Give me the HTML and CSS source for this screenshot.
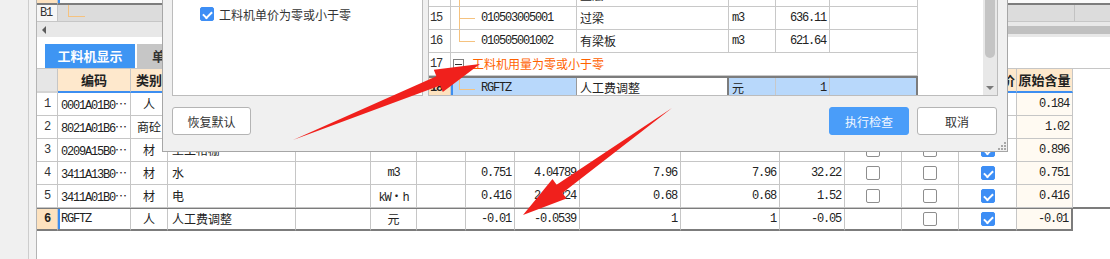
FILE: index.html
```html
<!DOCTYPE html>
<html lang="zh-CN">
<head>
    <meta charset="UTF-8">
    <title>工料机检查</title>
    <link rel="stylesheet" href="styles.css">
</head>
<body>
    <div class="app">
        <div class="side"></div>
        <div class="main">
            <div class="top-grid">
                <div class="trow trow-cur">
                    <span class="rn"></span>
                    <span class="tc"></span>
                </div>
                <div class="trow trow-group">
                    <span class="rn mono">B1</span>
                    <span class="tc wide"><i class="branch end"></i></span>
                    <span class="tc"></span>
                </div>
            </div>
            <div class="hscroll"><i class="arrow-left"></i><i class="hthumb"></i></div>

            <div class="tabs">
                <div class="tab on">工料机显示</div>
                <div class="tab">单价构成</div>
            </div>

            <div class="tbl">
                <div class="tr th">
                    <span class="rn"></span><span>编码</span><span>类别</span><span></span><span></span><span></span><span></span><span></span><span></span><span></span><span></span><span></span><span></span><span></span><span class="tail">是否计价</span><span>原始含量</span>
                </div>
                <div class="tr">
                    <span class="rn mono">1</span><span class="cd mono">0001A01B0<span class="ell">…</span></span><span class="c">人</span><span></span><span></span><span></span><span></span><span></span><span></span><span></span><span></span><span></span><span class="ck"><i class="cb"></i></span><span class="ck"><i class="cb"></i></span><span class="ck"><i class="cb on"></i></span><span class="og r mono">0.184</span>
                </div>
                <div class="tr">
                    <span class="rn mono">2</span><span class="cd mono">8021A01B6<span class="ell">…</span></span><span class="c">商砼</span><span></span><span></span><span></span><span></span><span></span><span></span><span></span><span></span><span></span><span class="ck"><i class="cb"></i></span><span class="ck"><i class="cb"></i></span><span class="ck"><i class="cb on"></i></span><span class="og r mono">1.02</span>
                </div>
                <div class="tr">
                    <span class="rn mono">3</span><span class="cd mono">0209A15B0<span class="ell">…</span></span><span class="c">材</span><span class="nm">土工格栅</span><span></span><span></span><span></span><span></span><span></span><span></span><span></span><span></span><span class="ck"><i class="cb"></i></span><span class="ck"><i class="cb"></i></span><span class="ck"><i class="cb on"></i></span><span class="og r mono">0.896</span>
                </div>
                <div class="tr">
                    <span class="rn mono">4</span><span class="cd mono">3411A13B0<span class="ell">…</span></span><span class="c">材</span><span class="nm">水</span><span></span><span class="c mono">m3</span><span></span><span class="r mono">0.751</span><span class="r mono">4.04789</span><span class="r mono">7.96</span><span class="r mono">7.96</span><span class="r mono">32.22</span><span class="ck"><i class="cb"></i></span><span class="ck"><i class="cb"></i></span><span class="ck"><i class="cb on"></i></span><span class="og r mono">0.751</span>
                </div>
                <div class="tr">
                    <span class="rn mono">5</span><span class="cd mono">3411A01B0<span class="ell">…</span></span><span class="c">材</span><span class="nm">电</span><span></span><span class="c mono">kW<span class="ell">·</span>h</span><span></span><span class="r mono">0.416</span><span class="r mono">2.04224</span><span class="r mono">0.68</span><span class="r mono">0.68</span><span class="r mono">1.52</span><span class="ck"><i class="cb"></i></span><span class="ck"><i class="cb"></i></span><span class="ck"><i class="cb on"></i></span><span class="og r mono">0.416</span>
                </div>
                <div class="tr cur">
                    <span class="rn mono">6</span><span class="cd mono">RGFTZ</span><span class="c">人</span><span class="nm">人工费调整</span><span></span><span class="c">元</span><span></span><span class="r mono">-0.01</span><span class="r mono">-0.0539</span><span class="r mono">1</span><span class="r mono">1</span><span class="r mono">-0.05</span><span></span><span class="ck"><i class="cb"></i></span><span class="ck"><i class="cb on"></i></span><span class="og r mono">-0.01</span>
                </div>
            </div>
        </div>
    </div>

    <div class="dialog">
        <div class="dlg-body">
            <div class="opt-panel">
                <label class="opt"><i class="cb on"></i>工料机单价为零或小于零</label>
            </div>
            <div class="res-panel">
                <div class="res-table">
                    <div class="rr">
                        <span class="rn"></span><span class="code"><i class="branch"></i></span><span class="nm">垫层</span><span></span><span></span><span></span>
                    </div>
                    <div class="rr">
                        <span class="rn mono">15</span><span class="code"><i class="branch"></i><em class="mono">010503005001</em></span><span class="nm">过梁</span><span class="unit mono">m3</span><span class="r mono">636.11</span><span></span>
                    </div>
                    <div class="rr">
                        <span class="rn mono">16</span><span class="code"><i class="branch end"></i><em class="mono">010505001002</em></span><span class="nm">有梁板</span><span class="unit mono">m3</span><span class="r mono">621.64</span><span></span>
                    </div>
                    <div class="rr">
                        <span class="rn mono">17</span><span class="group"><i class="fold"></i>工料机用量为零或小于零</span>
                    </div>
                    <div class="rr cur">
                        <span class="rn mono">18</span><span class="code sel"><i class="branch end"></i><em class="mono">RGFTZ</em></span><span class="nm focus">人工费调整</span><span class="unit sel">元</span><span class="r mono sel">1</span><span class="sel last"></span>
                    </div>
                </div>
                <div class="vscroll"><i class="vthumb"></i><i class="vdown"></i></div>
            </div>
        </div>
        <div class="dlg-foot">
            <button class="btn">恢复默认</button>
            <button class="btn primary">执行检查</button>
            <button class="btn">取消</button>
        </div>
        <svg class="grip" width="9" height="9" viewBox="0 0 9 9">
            <rect x="7" y="1" width="2" height="2"/>
            <rect x="4" y="4" width="2" height="2"/>
            <rect x="7" y="4" width="2" height="2"/>
            <rect x="1" y="7" width="2" height="2"/>
            <rect x="4" y="7" width="2" height="2"/>
            <rect x="7" y="7" width="2" height="2"/>
        </svg>
    </div>

    <!-- annotation arrows drawn on top of the screenshot -->
    <svg class="marks" width="1110" height="259" viewBox="0 0 1110 259">
        <polygon points="293,140 436.4,76.3 433.8,69.8 480,64 442.8,92 440.2,85.5"/>
        <polygon points="672,108 556.6,184.7 552.5,179.1 523,215 566.5,198.5 562.4,192.9"/>
    </svg>
</body>
</html>
```

FILE: styles.css
```css
* {
    box-sizing: border-box;
}

body {
    margin: 0;
    width: 1110px;
    height: 259px;
    overflow: hidden;
    position: relative;
    background: #fff;
    font-family: "Noto Sans CJK SC", "Liberation Sans", sans-serif;
    font-size: 12px;
    color: #222;
}

i, em {
    font-style: normal;
}

.mono {
    font-family: "Liberation Mono", monospace;
    letter-spacing: -1.2px;
}

.ell {
    font-family: "Noto Sans CJK SC", sans-serif;
    letter-spacing: 0;
}

.app {
    display: flex;
    height: 259px;
}

.side {
    flex: 0 0 37px;
    border-right: 1px solid #b4b4b4;
    background: linear-gradient(to right, #f0f0f0 28px, #cdcdcd 28px, #cdcdcd 29px, #f2f2f2 29px);
}

.main {
    flex: 1;
    display: flex;
    flex-direction: column;
}

/* upper grid (partly hidden) */
.top-grid {
    border-bottom: 1px solid #c6c6c6;
}

.trow {
    display: flex;
}

.trow .rn {
    flex: 0 0 21px;
    border-right: 1px solid #c6c6c6;
}

.trow .tc {
    flex: 1;
}

.trow-cur {
    height: 5px;
}

.trow-cur .rn {
    background: #fde2bf;
    border-bottom: 2px solid #7c7c7c;
}

.trow-cur .tc {
    background: #fafafa;
    border-bottom: 2px solid #7c7c7c;
    box-shadow: inset 2px 0 0 #3d8ef0;
}

.trow-group {
    height: 16px;
}

.trow-group .rn {
    background: #f6f6f6;
    line-height: 16px;
    padding-left: 3px;
    color: #333;
}

.trow-group .tc {
    background: #dcdcdc;
    display: flex;
}

.trow-group .tc.wide {
    flex: 0 0 1017px;
    border-right: 1px solid #c2c2c2;
}

.trow-group .branch {
    margin-left: 10px;
    width: 17px;
}

.hscroll {
    height: 15px;
    background: #e8e8e8;
    display: flex;
    align-items: center;
}

.arrow-left {
    width: 0;
    height: 0;
    margin-left: 5px;
    border-top: 4px solid transparent;
    border-bottom: 4px solid transparent;
    border-right: 4px solid #5c5c5c;
}

.hthumb {
    margin-left: auto;
    width: 520px;
    height: 8px;
    background: #c0c0c0;
}

/* tabs */
.tabs {
    display: flex;
    gap: 2px;
    height: 24px;
    margin-top: 7px;
    padding-left: 8px;
}

.tab {
    padding: 0 15px;
    line-height: 24px;
    font-size: 13px;
    font-weight: bold;
    background: #c6c6c6;
    color: #333;
}

.tab.on {
    width: 90px;
    padding: 0;
    text-align: center;
    background: #3e95f3;
    color: #fff;
}

/* main grid */
.tbl {
    border-top: 1px solid #c6c6c6;
}

.tr {
    display: grid;
    grid-template-columns: 21px 73px 37px 128px 75px 46px 49px 49px 65px 101px 99px 65px 57px 57px 58px 56px;
    height: 23px;
}

.tr > span {
    border-right: 1px solid #c6c6c6;
    border-bottom: 1px solid #c6c6c6;
    line-height: 22px;
    white-space: nowrap;
    overflow: hidden;
}

.tr.th {
    height: 24px;
}

.tr.th > span {
    border-bottom: 2px solid #3d8ef0;
    background: #fee8cc;
    font-weight: bold;
    font-size: 13px;
    text-align: center;
}

.tr.th > .tail {
    text-align: right;
    padding-right: 1px;
}

.tr.th > .rn {
    background: #e6e6e6;
    border-bottom-color: #d4d4d4;
}

.tr .rn {
    text-align: center;
    color: #333;
}

.c {
    text-align: center;
}

.r {
    text-align: right;
    padding-right: 3px;
}

.cd {
    padding-left: 3px;
}

.nm {
    padding-left: 4px;
}

.ck {
    display: flex;
    align-items: center;
    justify-content: center;
}

.og {
    background: #fffaf2;
}

.tr.cur {
    height: 24px;
    margin-top: -1px;
    border-top: 2px solid #7c7c7c;
}

.tr.cur > span {
    border-bottom: 2px solid #7c7c7c;
    line-height: 20px;
}

.tr.cur > .rn {
    background: #fde2bf;
    font-weight: bold;
    color: #222;
}

.tr.cur > .cd {
    box-shadow: inset 2px 0 0 #3d8ef0;
}

.tr.cur > .og {
    border-right: 2px solid #7c7c7c;
}

/* checkboxes */
.cb {
    display: block;
    width: 14px;
    height: 14px;
    border: 1px solid #8e8e8e;
    border-radius: 2px;
    background: #fff;
}

.cb.on {
    border-color: #3d8ef5;
    background: #3d8ef5;
}

.cb.on::after {
    content: "";
    display: block;
    width: 7px;
    height: 4px;
    margin: 3px 0 0 2px;
    border-left: 2px solid #fff;
    border-bottom: 2px solid #fff;
    transform: rotate(-45deg);
}

/* tree connectors */
.branch {
    flex: none;
    background:
        linear-gradient(#f5c27f, #f5c27f) left top / 1px 100% no-repeat,
        linear-gradient(#f5c27f, #f5c27f) left 11px / 100% 1px no-repeat;
}

.branch.end {
    background:
        linear-gradient(#f5c27f, #f5c27f) left top / 1px 12px no-repeat,
        linear-gradient(#f5c27f, #f5c27f) left 11px / 100% 1px no-repeat;
}

/* dialog */
.dialog {
    position: absolute;
    left: 162px;
    top: -18px;
    width: 846px;
    height: 170px;
    border: 1px solid #a6a6a6;
    background: #f0f0f0;
    padding: 0 9px 16px;
    display: flex;
    flex-direction: column;
}

.dlg-body {
    display: flex;
    gap: 5px;
    height: 113px;
}

.opt-panel {
    width: 251px;
    border: 1px solid #bcbcbc;
    background: #fff;
    padding: 16px 0 0 27px;
}

.opt {
    display: flex;
    align-items: center;
    gap: 5px;
    height: 28px;
    color: #333;
}

.res-panel {
    width: 570px;
    border: 1px solid #bcbcbc;
    background: #fff;
    display: flex;
    overflow: hidden;
}

.res-table {
    flex: 0 0 554px;
}

.rr {
    display: grid;
    grid-template-columns: 22px 126px 152px 47px 54px 88px;
    width: 489px;
    height: 23px;
}

.rr > span {
    border-right: 1px solid #c8c8c8;
    border-bottom: 1px solid #c8c8c8;
    line-height: 22px;
    white-space: nowrap;
    overflow: hidden;
}

.rr .rn {
    padding-left: 1px;
    color: #333;
}

.rr .nm {
    padding-left: 3px;
}

.rr .unit {
    padding-left: 3px;
}

.code {
    display: flex;
}

.code .branch {
    width: 16px;
    margin-left: 8px;
}

.code em {
    margin-left: 6px;
}

.group {
    grid-column: span 5;
    display: flex;
    align-items: center;
    color: #ff6200;
}

.fold {
    width: 11px;
    height: 11px;
    margin: 0 8px 0 2px;
    border: 1px solid #808080;
    background: #fff;
    display: flex;
    align-items: center;
    justify-content: center;
}

.fold::after {
    content: "";
    width: 7px;
    height: 1px;
    background: #333;
}

.rr.cur {
    border-top: 2px solid #7c7c7c;
}

.rr.cur > span {
    line-height: 20px;
}

.rr.cur .rn {
    background: #fde2bf;
    font-weight: bold;
    color: #222;
}

.rr .sel {
    background: #b8d8fb;
}

.rr .code.sel {
    box-shadow: inset 2px 0 0 #3d8ef0;
    border-right-color: #9a9a9a;
}

.rr .focus {
    background: #fff;
    border-right: 2px solid #7c7c7c;
}

.rr .last {
    border-right: 2px solid #7c7c7c;
}

.vscroll {
    margin-left: auto;
    width: 14px;
    background: #e8e8e8;
    display: flex;
    flex-direction: column;
    align-items: center;
}

.vthumb {
    width: 10px;
    height: 74px;
    border-radius: 5px;
    background: #c4c4c4;
}

.vdown {
    margin-top: auto;
    margin-bottom: 5px;
    width: 0;
    height: 0;
    border-left: 4px solid transparent;
    border-right: 4px solid transparent;
    border-top: 4px solid #7a7a7a;
}

.dlg-foot {
    display: flex;
    margin-top: 11px;
    padding-right: 1px;
}

.btn {
    height: 28px;
    width: 80px;
    padding: 0;
    border: 1px solid #b4b4b4;
    border-radius: 3px;
    background: #fff;
    font-family: "Noto Sans CJK SC", sans-serif;
    font-size: 12px;
    color: #333;
}

.btn:first-child {
    width: 79px;
}

.btn.primary {
    margin-left: auto;
    margin-right: 8px;
    border-color: #4a9df9;
    background: #4a9df9;
    color: #f2f7ff;
}

.grip {
    position: absolute;
    right: 1px;
    bottom: 1px;
    fill: #a8a8a8;
}

/* red annotation arrows */
.marks {
    position: absolute;
    left: 0;
    top: 0;
    pointer-events: none;
    fill: #f0201c;
}
```
